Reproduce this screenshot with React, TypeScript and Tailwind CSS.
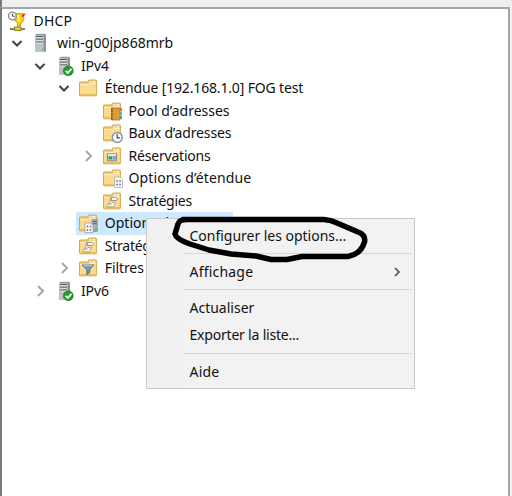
import React from "react";

type IconKind = "dhcp" | "server" | "serverOk" | "folder" | "pool" | "leases" | "reserve" | "options" | "policy" | "serverOptions" | "filter";

function Folder() {
  return (
    <>
      <path d="M1.5 17V4.6Q1.5 4 2.2 4H9.3L11 2H17.5Q18.4 2 18.4 3V17Q18.4 17.8 17.5 17.8H2.3Q1.5 17.8 1.5 17Z" fill="#f3cc73" stroke="#d6a548" strokeWidth="1" />
      <path d="M12 3.7H17" stroke="#fffaf0" strokeWidth="1.6" />
      <path d="M13 3.9H15" stroke="#b9b08a" strokeWidth=".8" />
      <path d="M2.2 6.3H10.6L12 5.4H17.8V16.2H2.2Z" fill="#fadb90" />
      <path d="M2.2 6.5H10.8L12.2 5.5H17.8" stroke="#fff2cc" fill="none" strokeWidth=".9" />
      <path d="M2.2 16.6H17.8" stroke="#eabf62" strokeWidth="1.2" />
    </>
  );
}

function Server() {
  return (
    <>
      <path d="M5 2L7 .8H15L16 2V18.5H5Z" fill="#8e989d" />
      <path d="M5 2H13.8V18.5H5Z" fill="#b9c3c7" />
      <path d="M13.8 2H16V18.5H13.8Z" fill="#89949a" />
      <path d="M6 3.5H13M6 6.2H13M6 9H13" stroke="#4a555a" strokeWidth="1" />
      <path d="M6 4.6H13M6 7.3H13M6 10.1H13" stroke="#eef2f3" strokeWidth=".8" />
    </>
  );
}

function Scroll() {
  return (
    <>
      <path d="M8.5 6.5H14.5Q16.5 7.5 14.5 9.5H13.3L12.5 14.5Q12 15.8 10.5 15.8H5.5Q4 14 6 13H7.4Z" fill="#f8f6ee" stroke="#a89c7c" strokeWidth=".9" />
      <path d="M8.5 6.5Q10.5 8 9 9.5H13.3M9.5 13H7.4M9.5 11.3H12" stroke="#8c8573" strokeWidth=".9" fill="none" />
    </>
  );
}

function Icon({ kind }: { kind: IconKind }) {
  return (
    <svg viewBox="0 0 20 20" className="h-5 w-5 shrink-0 overflow-visible">
      {kind === "dhcp" && (
        <>
          <path d="M8 2.5H16L17 8Q16 12 13.5 12.5V15H10.5V12L7 9Z" fill="#f3d20b" stroke="#b99d18" strokeWidth=".8" />
          <path d="M10.8 4L12 10" stroke="#fff48f" strokeWidth="2" />
          <path d="M15 5.5L17.8 2.8" stroke="#e32626" strokeWidth="1.8" />
          <path d="M3 18H18" stroke="#77734a" strokeWidth="1.8" />
          <path d="M7.5 16H14V19.5H7.5Z" stroke="#8a7c20" strokeWidth="1" fill="#ead22e" />
          <circle cx="5.4" cy="5" r="3.9" fill="#f5f6f6" stroke="#8d8d8d" strokeWidth="1.4" />
          <path d="M5.5 2.7V5.2H7.8" stroke="#555" fill="none" />
        </>
      )}
      {kind === "server" && (<><Server /><path d="M11.5 15.5H14V17.5H11.5Z" fill="#65db27" /></>)}
      {kind === "serverOk" && (
        <>
          <Server />
          <circle cx="14.3" cy="14.8" r="4.9" fill="#269a2b" stroke="#177d20" strokeWidth=".7" />
          <path d="M11.6 14.8L13.8 17L17.4 12.9" fill="none" stroke="white" strokeWidth="1.8" />
        </>
      )}
      {!["dhcp", "server", "serverOk"].includes(kind) && <Folder />}
      {kind === "pool" && (
        <>
          <path d="M9.5 7H18V19H9.5Z" fill="#dc9c35" stroke="#b67722" strokeWidth=".8" />
          <path d="M10 7V19.5" stroke="#6f4b22" strokeWidth="1.5" strokeDasharray="1.5 1" />
          <path d="M19 7V10" stroke="#ee5b35" strokeWidth="1.8" />
          <path d="M19 11V14" stroke="#65b94f" strokeWidth="1.8" />
          <path d="M19 15V18" stroke="#4d82c0" strokeWidth="1.8" />
        </>
      )}
      {kind === "leases" && (<><circle cx="15.3" cy="14.5" r="5" fill="#f5f9fc" stroke="#8495a1" strokeWidth="1.4" /><path d="M15.2 11V14.8H18.2" fill="none" stroke="#44525e" strokeWidth="1.2" /></>)}
      {kind === "reserve" && (<><path d="M5.5 7.8H14.5V14.8H5.5Z" fill="#dce4e8" stroke="#7b8990" /><path d="M6 8.8H14" stroke="#f8fbfc" /><path d="M6.5 10.3H10V13.5H6.5Z" fill="#31a54b" /><path d="M10.5 10.3H13.8V13.5H10.5Z" fill="#648499" /><path d="M11 11.8H13.5" stroke="#d6e6ee" strokeWidth=".8" /></>)}
      {kind === "options" && (<><path d="M12.5 9H18L20.5 11.5V19.5H12.5Z" fill="#faf9fc" stroke="#a9a9b0" strokeWidth=".8" /><path d="M14.3 13H15.8M17.3 13H18.8M14.3 16.5H15.8M17.3 16.5H18.8" stroke="#64607e" strokeWidth="1.5" /></>)}
      {kind === "policy" && <Scroll />}
      {kind === "serverOptions" && (<><path d="M14 6.5H19.3V18.5H14Z" fill="#a9b5ba" stroke="#7c8b92" strokeWidth=".7" /><path d="M15 8.5H18.7M15 10.7H18.7" stroke="#4b5962" /><path d="M16.8 15.5H19V17.5H16.8Z" fill="#4cc532" /><path d="M7 10H12.5L15 12.5V19.5H7Z" fill="#faf9fc" stroke="#a0a0a8" strokeWidth=".8" /><path d="M8.7 13.4H10.2M11.8 13.4H13.3M8.7 16.9H10.2M11.8 16.9H13.3" stroke="#64607e" strokeWidth="1.5" /></>)}
      {kind === "filter" && (<><path d="M4 7H15.8L11.8 11.5V14.5L8.8 16.5V11.5Z" fill="#719abf" stroke="#58718b" strokeWidth="1" /><path d="M5.3 7.7H14.5" stroke="#b7d9ef" strokeWidth="1" /></>)}
    </svg>
  );
}

const tree: { label: string; icon: IconKind; indent: string; arrow?: "open" | "closed"; selected?: boolean; tracking: string }[] = [
  { label: "DHCP", icon: "dhcp", indent: "pl-[6.5px]", tracking: "tracking-[0.2px]" },
  { label: "win-g00jp868mrb", icon: "server", indent: "pl-[6.5px]", arrow: "open", tracking: "tracking-[0px]" },
  { label: "IPv4", icon: "serverOk", indent: "pl-[30.4px]", arrow: "open", tracking: "tracking-[-0.05px]" },
  { label: "Étendue [192.168.1.0] FOG test", icon: "folder", indent: "pl-[54.3px]", arrow: "open", tracking: "tracking-[-0.16px]" },
  { label: "Pool d’adresses", icon: "pool", indent: "pl-[78px]", tracking: "tracking-[0px]" },
  { label: "Baux d’adresses", icon: "leases", indent: "pl-[78px]", tracking: "tracking-[-0.15px]" },
  { label: "Réservations", icon: "reserve", indent: "pl-[78px]", arrow: "closed", tracking: "tracking-[-0.2px]" },
  { label: "Options d’étendue", icon: "options", indent: "pl-[78px]", tracking: "tracking-[0.13px]" },
  { label: "Stratégies", icon: "policy", indent: "pl-[78px]", tracking: "tracking-[-0.25px]" },
  { label: "Options de serveur", icon: "serverOptions", indent: "pl-[54.3px]", selected: true, tracking: "tracking-[0px]" },
  { label: "Stratégies", icon: "policy", indent: "pl-[54.3px]", tracking: "tracking-[-0.25px]" },
  { label: "Filtres", icon: "filter", indent: "pl-[54.3px]", arrow: "closed", tracking: "tracking-[-0.1px]" },
  { label: "IPv6", icon: "serverOk", indent: "pl-[30.4px]", arrow: "closed", tracking: "tracking-[-0.05px]" },
];

function MenuItem({ label, tracking, tall = false, arrow = false }: { label: string; tracking: string; tall?: boolean; arrow?: boolean }) {
  return (
    <div className={`${tall ? "h-[28px]" : "h-[27px]"} flex items-center justify-between pl-[42.5px] pr-[13px]`}>
      <span className={tracking}>{label}</span>
      {arrow && <svg viewBox="0 0 8 12" className="h-3 w-2"><path d="M2 2L6 6L2 10" fill="none" stroke="#4a4a4a" strokeWidth="1.5" /></svg>}
    </div>
  );
}

const Separator = () => <div className="my-1 ml-[37px] mr-[3px] h-px bg-[#d7d7d7]" />;

export default function App() {
  return (
    <div className="relative h-[496px] w-[512px] overflow-hidden bg-[#f0f0f0] font-['Noto_Sans','Open_Sans',sans-serif] text-[14px] leading-[20px] text-[#111]">
      <div className="h-[7px] border-l-2 border-[#777b7f] bg-[#f0f0f0]" />
      <div className="h-[489px] w-[510px] border-l-2 border-r-2 border-t-2 border-l-[#777b7f] border-r-[#a0a8af] border-t-[#a0a8af] bg-white">
        <div className="-ml-0.5 pt-[0.5px]">
          {tree.map((row, i) => (
            <div key={i} className={`flex h-[22.5px] items-center ${row.indent}`}>
              {row.icon !== "dhcp" && (
                <span className="mr-[1.5px] flex w-5 shrink-0 justify-center">
                  {row.arrow && <svg viewBox="0 0 12 12" className="h-3 w-3"><path d={row.arrow === "open" ? "M1.5 4L6 8.5L10.5 4" : "M4 1L9 6L4 11"} fill="none" stroke={row.arrow === "open" ? "#404040" : "#a5a5a5"} strokeWidth="2" /></svg>}
                </span>
              )}
              <div className={`flex h-[22.5px] items-center gap-[7px] ${row.icon === "dhcp" ? "" : "pl-[2px]"} ${row.selected ? "w-[157px] bg-[#cde8ff]" : ""}`}>
                <Icon kind={row.icon} />
                <span className={`whitespace-nowrap ${row.tracking}`}>{row.label}</span>
              </div>
            </div>
          ))}
        </div>
      </div>
      <div className="absolute left-[146px] top-[218px] h-[171px] w-[269px] border border-[#c9c9c9] bg-[linear-gradient(to_right,#f0f0f0_0_37px,#f2f2f2_37px)] pt-[3px]">
        <MenuItem label="Configurer les options..." tracking="tracking-[-0.02px]" />
        <Separator />
        <MenuItem label="Affichage" tracking="tracking-[0.2px]" arrow />
        <Separator />
        <MenuItem label="Actualiser" tracking="tracking-[0px]" />
        <MenuItem label="Exporter la liste..." tracking="tracking-[-0.2px]" tall />
        <Separator />
        <MenuItem label="Aide" tracking="tracking-[0.2px]" />
      </div>
      <svg viewBox="0 0 512 496" className="pointer-events-none absolute left-0 top-0 h-[496px] w-[512px]">
        <path d="M183 219.5H324Q331 220 337 223L358 232Q366 235 364.5 242Q361 254 348 256.5L302 256.5L287 259.5H271L256 256L231 254L209 250L190 244Q176 239 175 234L178 224Q179 219.5 187 219.5" fill="none" stroke="black" strokeWidth="5.5" strokeLinecap="round" strokeLinejoin="round" />
      </svg>
    </div>
  );
}
